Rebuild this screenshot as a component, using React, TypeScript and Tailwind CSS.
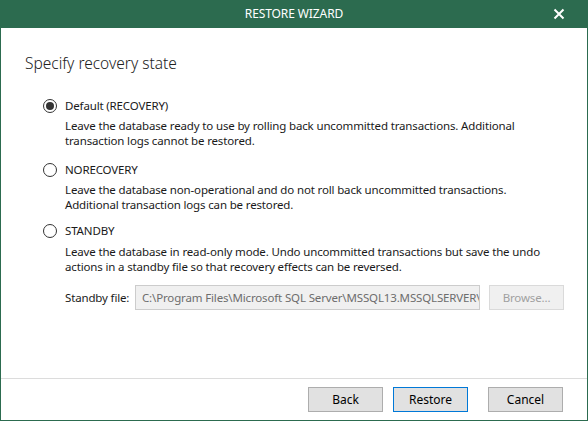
import React from "react";

const font = { fontFamily: '"Noto Sans", "Open Sans", sans-serif' };

function Radio({ checked }: { checked?: boolean }) {
  return (
    <div className="w-[14px] h-[14px] rounded-full border border-[#333333] bg-white flex items-center justify-center shrink-0">
      {checked && <div className="w-[8px] h-[8px] rounded-full bg-[#333333]" />}
    </div>
  );
}

function Btn({ label, focus }: { label: string; focus?: boolean }) {
  return (
    <div
      className={
        "w-[75px] h-[25px] flex items-center justify-center bg-[#e1e1e1] text-[12px] text-black border " +
        (focus ? "border-[#0078d7]" : "border-[#adadad]")
      }
    >
      {label}
    </div>
  );
}

export default function App() {
  return (
    <div
      className="w-[588px] h-[421px] bg-[#2c6b4f] flex flex-col text-[#1a1a1a]"
      style={font}
    >
      <div className="h-[28px] shrink-0 flex items-center relative">
        <div className="flex-1 text-center text-white text-[12px] leading-none tracking-[-0.1px]">RESTORE WIZARD</div>
        <svg
          className="absolute left-[553px] top-[8px]"
          width="12"
          height="12"
          viewBox="0 0 12 12"
        >
          <path d="M1.5 1.5 L10.5 10.5 M10.5 1.5 L1.5 10.5" stroke="white" strokeWidth="2" />
        </svg>
      </div>
      <div className="flex-1 mx-[1px] mb-[1px] bg-white flex flex-col">
        <div className="flex-1 pl-[24px] pt-[24px]">
          <div className="text-[15.5px] leading-[22px] font-light text-[#222]">Specify recovery state</div>
          <div className="pl-[18px] mt-[24px] text-[11.5px] tracking-[-0.15px]">
            <div className="flex items-center h-[16px] gap-[8px]">
              <Radio checked />
              <span>Default (RECOVERY)</span>
            </div>
            <div className="pl-[22px] mt-[4px] leading-[15px] whitespace-nowrap">
              Leave the database ready to use by rolling back uncommitted transactions. Additional
              <br />
              transaction logs cannot be restored.
            </div>

            <div className="flex items-center h-[16px] gap-[8px] mt-[14px]">
              <Radio />
              <span>NORECOVERY</span>
            </div>
            <div className="pl-[22px] mt-[4px] leading-[15px] whitespace-nowrap">
              Leave the database non-operational and do not roll back uncommitted transactions.
              <br />
              Additional transaction logs can be restored.
            </div>

            <div className="flex items-center h-[16px] gap-[8px] mt-[11px]">
              <Radio />
              <span>STANDBY</span>
            </div>
            <div className="pl-[22px] mt-[5px] leading-[15px] whitespace-nowrap">
              Leave the database in read-only mode. Undo uncommitted transactions but save the undo
              <br />
              actions in a standby file so that recovery effects can be reversed.
            </div>

            <div className="pl-[22px] mt-[11px] flex items-center h-[25px]">
              <span className="w-[70px] shrink-0">Standby file:</span>
              <div className="w-[345px] h-[25px] border border-[#cccccc] bg-[#f0f0f0] flex items-center pl-[6px] overflow-hidden whitespace-nowrap text-[#6d6d6d]">
                C:\Program Files\Microsoft SQL Server\MSSQL13.MSSQLSERVER\MSSQL\Backup
              </div>
              <div className="ml-[9px] w-[75px] h-[25px] border border-[#dadada] bg-[#f0f0f0] flex items-center justify-center text-[#a0a0a0]">
                Browse...
              </div>
            </div>
          </div>
        </div>
        <div className="border-t border-[#dcdcdc] pt-[8px] pb-[8px] pr-[24px] flex justify-end">
          <Btn label="Back" />
          <div className="ml-[10px]">
            <Btn label="Restore" focus />
          </div>
          <div className="ml-[20px]">
            <Btn label="Cancel" />
          </div>
        </div>
      </div>
    </div>
  );
}
